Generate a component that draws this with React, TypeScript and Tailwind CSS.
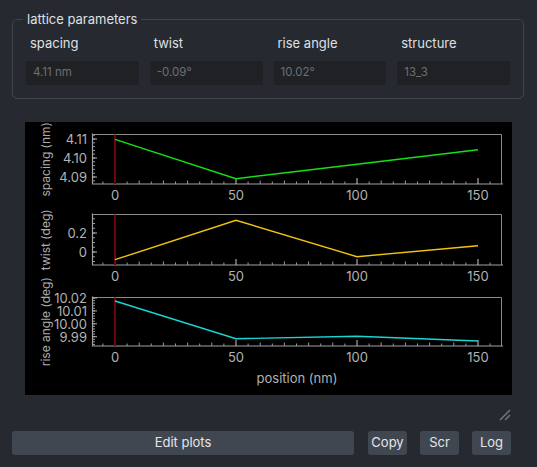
import React from 'react';

type Plot = {
  top: number;
  bottom: number;
  label: string;
  color: string;
  y: (v: number) => number;
  major: { v: number; text: string }[];
  minorFrom: number;
  minorTo: number;
  minorStep: number;
  data: number[];
};

const X = (v: number) => 115 + v * 2.42;
const LEFT = 92;
const RIGHT = 501.5;
const AXIS_END = 503;
const FONT = "Inter, 'Liberation Sans', sans-serif";

const PLOTS: Plot[] = [
  {
    top: 134.5,
    bottom: 184,
    label: 'spacing (nm)',
    color: '#14e014',
    y: (v) => 139 + ((4.11 - v) / 0.01) * 19,
    major: [
      { v: 4.11, text: '4.11' },
      { v: 4.1, text: '4.10' },
      { v: 4.09, text: '4.09' },
    ],
    minorFrom: 4.088,
    minorTo: 4.112,
    minorStep: 0.002,
    data: [139.3, 178.7, 164.2, 149.7],
  },
  {
    top: 214.5,
    bottom: 265,
    label: 'twist (deg)',
    color: '#f2c40f',
    y: (v) => 252 - v * 95,
    major: [
      { v: 0.2, text: '0.2' },
      { v: 0, text: '0' },
    ],
    minorFrom: -0.1,
    minorTo: 0.35,
    minorStep: 0.05,
    data: [259.7, 220.3, 256.7, 245.7],
  },
  {
    top: 297.5,
    bottom: 346,
    label: 'rise angle (deg)',
    color: '#16d6d6',
    y: (v) => 298 + (10.02 - v) * 1290,
    major: [
      { v: 10.02, text: '10.02' },
      { v: 10.01, text: '10.01' },
      { v: 10.0, text: '10.00' },
      { v: 9.99, text: '9.99' },
    ],
    minorFrom: 9.984,
    minorTo: 10.02,
    minorStep: 0.002,
    data: [301, 338.7, 336.3, 341],
  },
];

function range(from: number, to: number, step: number) {
  const out: number[] = [];
  for (let v = from; v <= to + step / 10; v += step) out.push(v);
  return out;
}

function PlotPanel({ p }: { p: Plot }) {
  const xMinor = range(-5, 155, 5);
  const mid = (p.top + p.bottom) / 2;
  return (
    <g>
      {/* frame */}
      <line x1={LEFT} y1={p.top} x2={RIGHT} y2={p.top} stroke="#8a8a8a" strokeWidth={1} />
      <line x1={RIGHT} y1={p.top} x2={RIGHT} y2={p.bottom} stroke="#8a8a8a" strokeWidth={1} />
      <line x1={LEFT + 0.5} y1={p.top - 1} x2={LEFT + 0.5} y2={p.bottom} stroke="#a2a2a2" strokeWidth={1.2} />
      <line x1={LEFT} y1={p.bottom} x2={AXIS_END} y2={p.bottom} stroke="#a2a2a2" strokeWidth={1.2} />

      {/* y ticks */}
      {range(p.minorFrom, p.minorTo, p.minorStep).map((v) => {
        const yy = p.y(v);
        if (yy < p.top - 1 || yy > p.bottom - 1) return null;
        return <line key={v} x1={LEFT} y1={yy} x2={LEFT + 3} y2={yy} stroke="#9a9a9a" strokeWidth={1} />;
      })}
      {p.major.map((t) => (
        <g key={t.text}>
          <line x1={LEFT} y1={p.y(t.v)} x2={LEFT + 5} y2={p.y(t.v)} stroke="#b0b0b0" strokeWidth={1} />
          <text
            x={87}
            y={p.y(t.v)}
            textAnchor="end"
            dominantBaseline="central"
            fontSize={13}
            fill="#b2b2b2"
            fontFamily={FONT}
          >
            {t.text}
          </text>
        </g>
      ))}

      {/* x ticks */}
      {xMinor.map((v) => {
        const xx = X(v);
        if (xx <= LEFT + 1) return null;
        const major = v % 50 === 0;
        return (
          <line
            key={v}
            x1={xx}
            y1={p.bottom}
            x2={xx}
            y2={p.bottom - (major ? 6 : v % 10 === 0 ? 3.5 : 2.5)}
            stroke={major ? '#c8c8c8' : '#9a9a9a'}
            strokeWidth={1}
          />
        );
      })}
      {[0, 50, 100, 150].map((v) => (
        <text
          key={v}
          x={X(v)}
          y={p.bottom + 10.5}
          textAnchor="middle"
          dominantBaseline="central"
          fontSize={13}
          fill="#b2b2b2"
          fontFamily={FONT}
        >
          {v}
        </text>
      ))}

      {/* axis label */}
      <text
        x={45.5}
        y={mid}
        transform={`rotate(-90 45.5 ${mid})`}
        textAnchor="middle"
        dominantBaseline="central"
        fontSize={12}
        fill="#ababab"
        fontFamily={FONT}
      >
        {p.label}
      </text>

      {/* cursor */}
      <line x1={115} y1={p.top} x2={115} y2={p.bottom} stroke="#6e0606" strokeWidth={2} />

      {/* data */}
      <polyline
        points={p.data.map((d, i) => `${X(i * 50)},${d}`).join(' ')}
        fill="none"
        stroke={p.color}
        strokeWidth={1.4}
      />
    </g>
  );
}

const FIELDS = [
  { label: 'spacing', value: '4.11 nm' },
  { label: 'twist', value: '-0.09°' },
  { label: 'rise angle', value: '10.02°' },
  { label: 'structure', value: '13_3' },
];

export default function App() {
  return (
    <div
      className="w-[537px] h-[467px] bg-[#262930] flex flex-col pl-[12px] pr-[13px] text-[#dcdde0]"
      style={{ fontFamily: FONT }}
    >
      <fieldset className="mt-[11px] border border-[#41444c] rounded-[5px] pb-[13px]">
        <legend className="ml-[10px] px-[4px] text-[13px] leading-[16px] text-[#dfe0e3]">lattice parameters</legend>
        <div className="grid grid-cols-4 gap-x-[11px] pt-[8px] px-[13px]">
          {FIELDS.map((f) => (
            <div key={f.label} className="flex flex-col">
              <span className="pl-[4px] text-[13px] leading-[16px] text-[#dfe0e3]">{f.label}</span>
              <div className="mt-[10px] h-[24px] rounded-[2px] bg-[#1f2125] px-[7px] flex items-center text-[11.5px] text-[#6c6f74]">
                {f.value}
              </div>
            </div>
          ))}
        </div>
      </fieldset>

      <div className="mt-[23px] ml-[13px] w-[487px] h-[273px] bg-black">
        <svg width={487} height={273} viewBox="25 122 487 273">
          {PLOTS.map((p) => (
            <PlotPanel key={p.label} p={p} />
          ))}
          <text
            x={297}
            y={378}
            textAnchor="middle"
            dominantBaseline="central"
            fontSize={13}
            fill="#b2b2b2"
            fontFamily={FONT}
          >
            position (nm)
          </text>
        </svg>
      </div>

      <div className="flex justify-end mt-[14px] pr-[13px]">
        <svg width={12} height={12} viewBox="0 0 12 12">
          <line x1={11} y1={1} x2={1} y2={11} stroke="#75787d" strokeWidth={1.4} />
          <line x1={11} y1={6} x2={6} y2={11} stroke="#75787d" strokeWidth={1.4} />
        </svg>
      </div>

      <div className="flex items-center mt-[10px] pr-[13px] gap-[13px] text-[13px] text-[#e4e5e8]">
        <button className="flex-1 h-[24px] rounded-[3px] bg-[#414751]">Edit plots</button>
        <button className="w-[39px] h-[24px] rounded-[3px] bg-[#414751] ml-[1px]">Copy</button>
        <button className="w-[39px] h-[24px] rounded-[3px] bg-[#414751]">Scr</button>
        <button className="w-[39px] h-[24px] rounded-[3px] bg-[#414751]">Log</button>
      </div>
    </div>
  );
}
